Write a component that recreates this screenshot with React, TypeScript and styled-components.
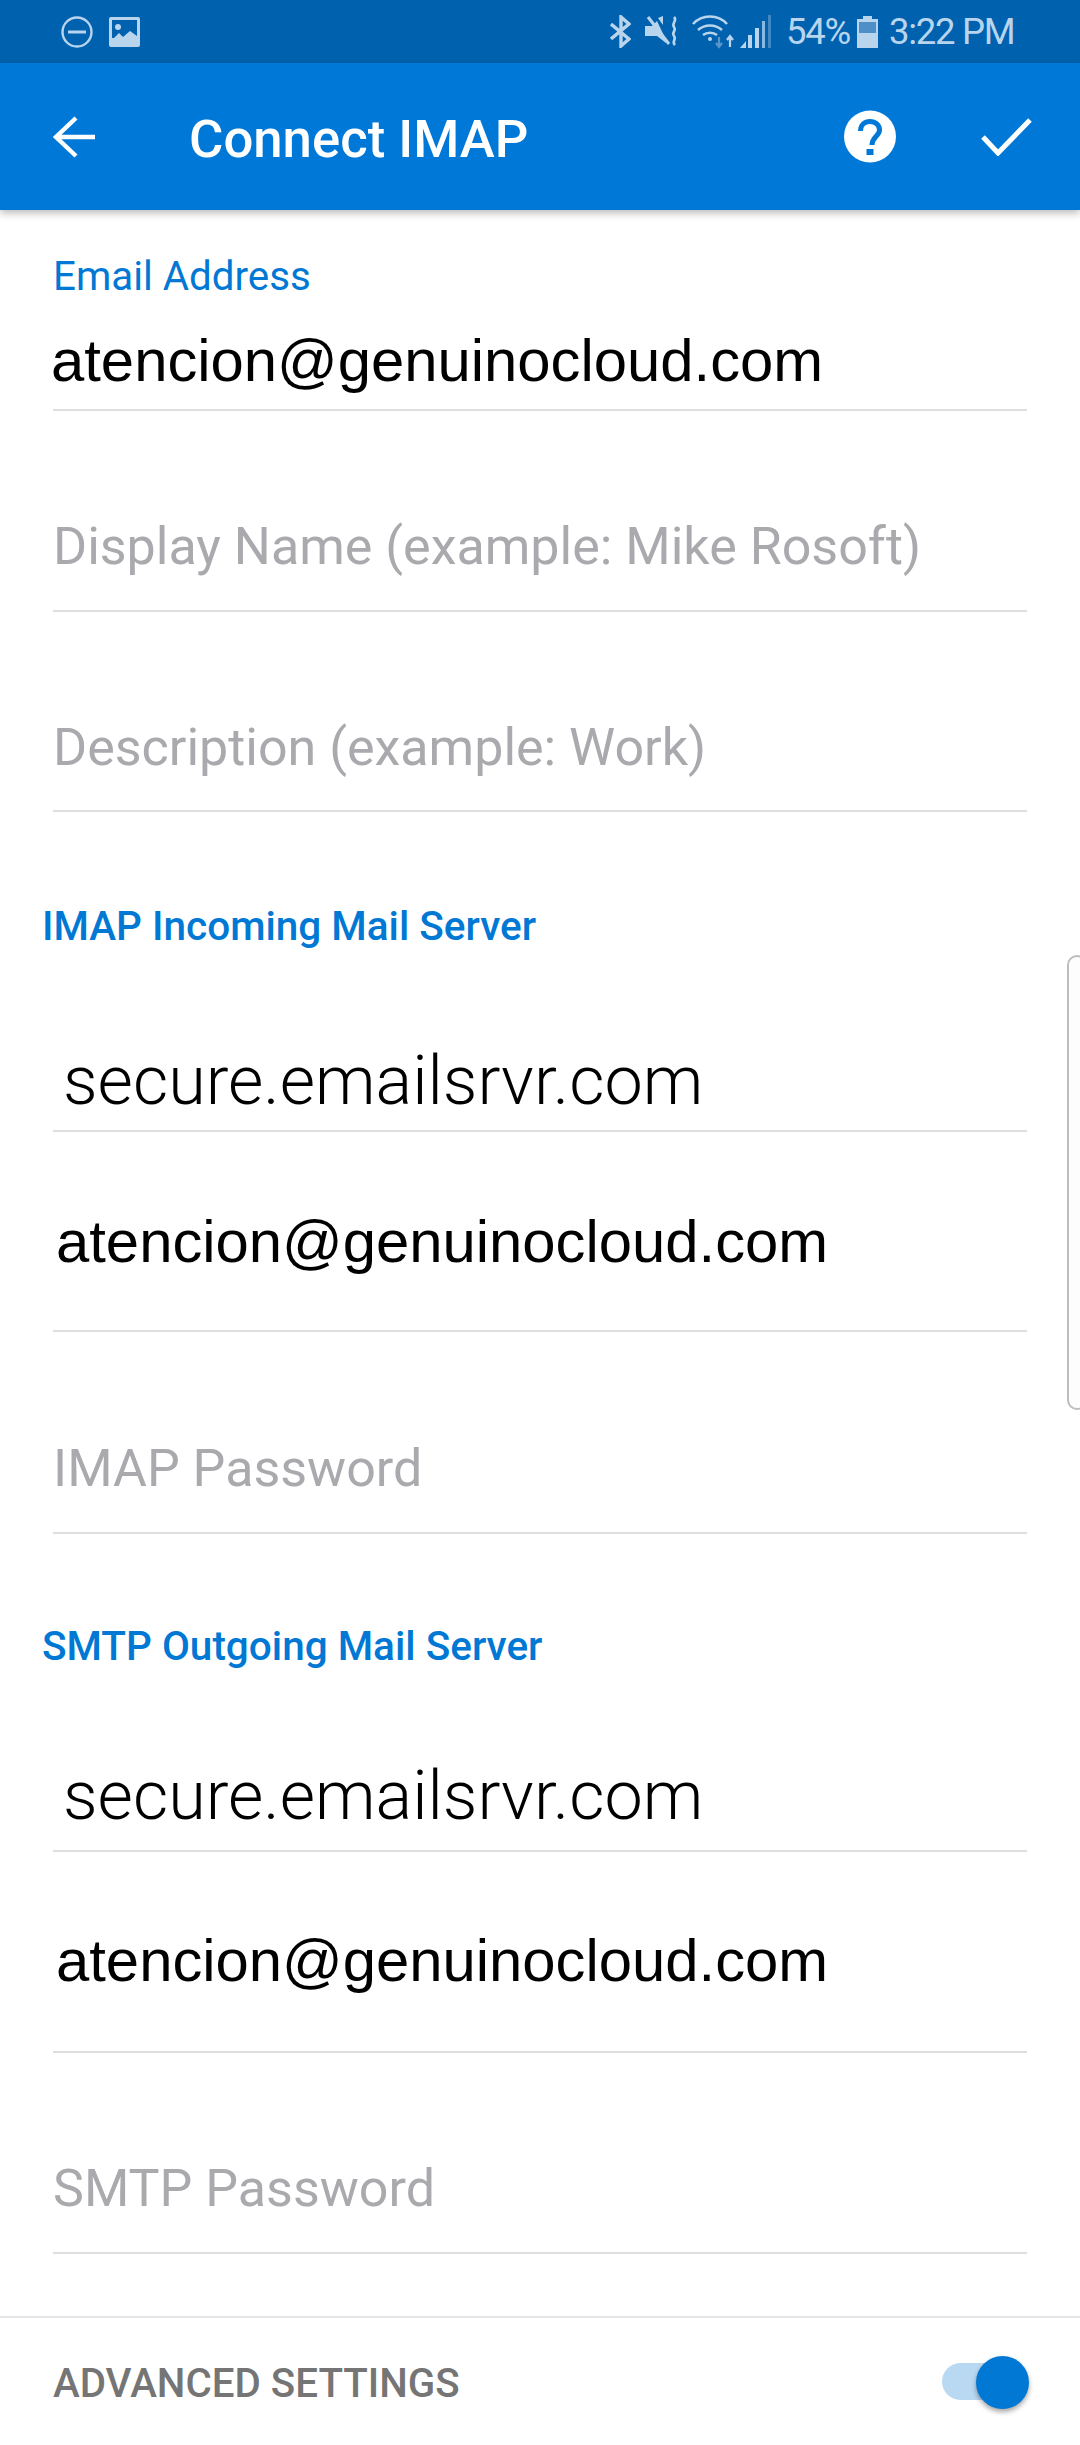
import React from "react";
import styled, { createGlobalStyle } from "styled-components";

const Global = createGlobalStyle`
  html, body { margin: 0; padding: 0; background: #fff; }
  body { width: 1080px; height: 2445px; overflow: hidden; font-family: Roboto, "Liberation Sans", sans-serif; }
`;

const Page = styled.div`
  position: relative;
  width: 1080px;
  height: 2445px;
  display: flex;
  flex-direction: column;
  background: #fff;
  overflow: hidden;
`;

const StatusBar = styled.div`
  height: 63px;
  flex: none;
  background: #0062ae;
  color: #b9d5ee;
  display: flex;
  align-items: center;
  justify-content: space-between;
  padding: 0 66px 0 61px;
`;

const StatusGroup = styled.div`
  display: flex;
  align-items: center;
`;

const StatusItem = styled.span<{ $ml?: number }>`
  display: flex;
  margin-left: ${(p) => p.$ml ?? 0}px;
`;

const StatusText = styled.span<{ $w: number; $ml: number }>`
  display: inline-block;
  width: ${(p) => p.$w}px;
  margin-left: ${(p) => p.$ml}px;
  font: 400 36.500px/63px Roboto, sans-serif;
  white-space: nowrap;
  letter-spacing: -1.300px;
`;

const AppBar = styled.header`
  height: 147px;
  flex: none;
  background: #0078d7;
  display: flex;
  align-items: center;
  padding: 0 48px 0 53px;
  box-shadow: 0 3px 8px rgba(0, 0, 0, 0.28);
  position: relative;
  z-index: 2;
`;

const Title = styled.h1`
  margin: 5px 0 0 94px;
  flex: 1;
  color: #fff;
  font: 500 52.700px/1 Roboto, sans-serif;
`;

const AppActions = styled.div`
  display: flex;
  align-items: center;
  gap: 85px;
`;

const Form = styled.main`
  flex: 1;
  display: flex;
  flex-direction: column;
  padding: 0 53px;
`;

const Field = styled.div<{ $h: number; $inset?: number }>`
  height: ${(p) => p.$h}px;
  flex: none;
  box-sizing: border-box;
  border-bottom: 2px solid #dedede;
  display: flex;
  flex-direction: column;
  justify-content: flex-end;
  padding-left: ${(p) => p.$inset ?? 0}px;
`;

const FloatingLabel = styled.div`
  color: #0078d4;
  font: 400 40.300px/48px Roboto, sans-serif;
  margin-bottom: 25px;
`;

const Value = styled.div<{ $bottom: number; $shift?: number }>`
  font-family: "Liberation Sans", sans-serif;
  font-size: 59.800px;
  line-height: 70px;
  color: #000;
  margin-bottom: ${(p) => p.$bottom}px;
  margin-left: ${(p) => p.$shift ?? 0}px;
  white-space: nowrap;
`;

const ServerValue = styled.div<{ $bottom: number }>`
  font: 300 68.300px/70px Roboto, sans-serif;
  color: #000;
  margin-bottom: ${(p) => p.$bottom}px;
  white-space: nowrap;
`;

const Placeholder = styled.div<{ $bottom?: number }>`
  color: #aaaaae;
  font: 400 52px/60px Roboto, sans-serif;
  margin-bottom: ${(p) => p.$bottom ?? 33}px;
  white-space: nowrap;
`;

const Section = styled.h2<{ $h: number }>`
  margin: 0 0 0 -11px;
  height: ${(p) => p.$h}px;
  flex: none;
  color: #0078d4;
  font: 500 40.500px/46px Roboto, sans-serif;
  display: flex;
  align-items: center;
`;

const Footer = styled.footer`
  position: absolute;
  left: 0;
  right: 0;
  bottom: 0;
  height: 129px;
  box-sizing: border-box;
  border-top: 2px solid #e6e6e6;
  display: flex;
  align-items: center;
  justify-content: space-between;
  padding: 2px 51px 0 53px;
`;

const FooterLabel = styled.span`
  color: #757575;
  font: 500 40.300px/1 Roboto, sans-serif;
  margin-top: 3px;
`;

const Toggle = styled.div`
  position: relative;
  width: 87px;
  height: 53px;
`;

const ToggleTrack = styled.div`
  position: absolute;
  left: 0;
  top: 7px;
  width: 68px;
  height: 37px;
  border-radius: 19px;
  background: #b9d9f3;
`;

const ToggleKnob = styled.div`
  position: absolute;
  right: 0;
  top: 0;
  width: 53px;
  height: 53px;
  border-radius: 50%;
  background: #0078d4;
  box-shadow: 0 3px 5px rgba(0, 0, 0, 0.35);
`;

const ScrollHandle = styled.div`
  position: absolute;
  left: 1067px;
  top: 955px;
  width: 20px;
  height: 455px;
  box-sizing: border-box;
  border: 2px solid #bdbdbd;
  border-radius: 12px;
  background: #fdfdfd;
`;

const DndIcon = () => (
  <svg width="32" height="32" viewBox="0 0 32 32" fill="none" stroke="currentColor" strokeWidth="2.400">
    <circle cx="16" cy="16" r="14.500" />
    <path d="M7 16h18" strokeWidth="3" />
  </svg>
);

const ImageIcon = () => (
  <svg width="31" height="30" viewBox="0 0 31 30">
    <rect x="0" y="0" width="31" height="30" rx="2" fill="currentColor" />
    <rect x="3" y="3" width="25" height="18" fill="#0062ae" />
    <circle cx="9" cy="10" r="3" fill="currentColor" />
    <path d="M3 23l7-7 4 4 7-6 7 5v8H3z" fill="currentColor" />
  </svg>
);

const Bluetooth = () => (
  <svg width="21" height="33" viewBox="0 0 21 33" fill="none" stroke="currentColor" strokeWidth="3.400">
    <path d="M1 9l18 15-8 7V2l8 7L1 24" />
  </svg>
);

const Muted = () => (
  <svg width="35" height="33" viewBox="0 0 35 33" fill="none" stroke="currentColor">
    <path d="M0 11h7l5-5 9 19v3l-9-7H0z" fill="currentColor" stroke="none" />
    <path d="M3 2l21 27" strokeWidth="3" />
    <path d="M29 2c4 4-3 6 0 10s-3 5 0 9-3 5 1 9" strokeWidth="2.600" />
    <path d="M13 3l5-2v9z" fill="currentColor" stroke="none" />
  </svg>
);

const Wifi = () => (
  <svg width="43" height="36" viewBox="0 0 43 36" fill="none" stroke="currentColor" strokeWidth="2.600">
    <path d="M1 10C10 0 26 0 35 10" />
    <path d="M6 16c7-6 17-6 24 0" />
    <path d="M11 21c4-3 10-3 14 0" />
    <circle cx="18" cy="25" r="2" fill="currentColor" stroke="none" />
    <path d="M27 23v9M24 29l3 4 3-4" stroke="#5a94c8" strokeWidth="2.200" />
    <path d="M38 33v-10M35 26l3-4 3 4" strokeWidth="2.200" />
  </svg>
);

const Signal = () => (
  <svg width="31" height="33" viewBox="0 0 31 33" fill="currentColor">
    <path d="M0 33l6-7v7z" />
    <rect x="8" y="20" width="4" height="13" />
    <rect x="15" y="13" width="4" height="20" />
    <rect x="22" y="6" width="3" height="27" opacity="0.75" />
    <rect x="28" y="0" width="3" height="33" opacity="0.35" />
  </svg>
);

const Battery = () => (
  <svg width="21" height="32" viewBox="0 0 21 32">
    <path d="M6 0h9v3h6v29H0V3h6z" fill="currentColor" />
    <rect x="2" y="6" width="17" height="11" fill="#4f8fc8" />
  </svg>
);

const BackArrow = () => (
  <svg width="42" height="42" viewBox="0 0 42 42" fill="none" stroke="#fff" strokeWidth="4.400">
    <path d="M42 21H3M23 2L3 21l20 19" />
  </svg>
);

const Help = () => (
  <svg width="52" height="53" viewBox="0 0 52 53">
    <circle cx="26" cy="26.500" r="26" fill="#fff" />
    <path d="M16.500 21c0-6 4-9.500 9.500-9.500S35.500 15 35.500 20c0 6-7.500 7-7.500 15" fill="none" stroke="#0078d7" strokeWidth="5" />
    <rect x="22.500" y="39" width="7" height="6" fill="#0078d7" />
  </svg>
);

const Check = () => (
  <svg width="51" height="38" viewBox="0 0 51 38" fill="none" stroke="#fff" strokeWidth="5">
    <path d="M2 19l15 16L49 2" />
  </svg>
);

export default function App() {
  return (
    <Page>
      <Global />
      <StatusBar>
        <StatusGroup>
          <DndIcon />
          <StatusItem $ml={16}>
            <ImageIcon />
          </StatusItem>
        </StatusGroup>
        <StatusGroup>
          <Bluetooth />
          <StatusItem $ml={14}>
            <Muted />
          </StatusItem>
          <StatusItem $ml={12}>
            <Wifi />
          </StatusItem>
          <StatusItem $ml={5}>
            <Signal />
          </StatusItem>
          <StatusText $w={60} $ml={15}>54%</StatusText>
          <StatusItem $ml={11}>
            <Battery />
          </StatusItem>
          <StatusText $w={125} $ml={11}>3:22 PM</StatusText>
        </StatusGroup>
      </StatusBar>
      <AppBar>
        <BackArrow />
        <Title>Connect IMAP</Title>
        <AppActions>
          <Help />
          <Check />
        </AppActions>
      </AppBar>
      <Form>
        <Field $h={201}>
          <FloatingLabel>Email Address</FloatingLabel>
          <Value $bottom={13} $shift={-2}>atencion@genuinocloud.com</Value>
        </Field>
        <Field $h={201}>
          <Placeholder>Display Name (example: Mike Rosoft)</Placeholder>
        </Field>
        <Field $h={200}>
          <Placeholder $bottom={32}>Description (example: Work)</Placeholder>
        </Field>
        <Section $h={228}>IMAP Incoming Mail Server</Section>
        <Field $h={92} $inset={10}>
          <ServerValue $bottom={14}>secure.emailsrvr.com</ServerValue>
        </Field>
        <Field $h={200} $inset={3}>
          <Value $bottom={53}>atencion@genuinocloud.com</Value>
        </Field>
        <Field $h={202}>
          <Placeholder>IMAP Password</Placeholder>
        </Field>
        <Section $h={224}>SMTP Outgoing Mail Server</Section>
        <Field $h={94} $inset={10}>
          <ServerValue $bottom={19}>secure.emailsrvr.com</ServerValue>
        </Field>
        <Field $h={201} $inset={3}>
          <Value $bottom={55}>atencion@genuinocloud.com</Value>
        </Field>
        <Field $h={201}>
          <Placeholder>SMTP Password</Placeholder>
        </Field>
      </Form>
      <ScrollHandle />
      <Footer>
        <FooterLabel>ADVANCED SETTINGS</FooterLabel>
        <Toggle>
          <ToggleTrack />
          <ToggleKnob />
        </Toggle>
      </Footer>
    </Page>
  );
}
